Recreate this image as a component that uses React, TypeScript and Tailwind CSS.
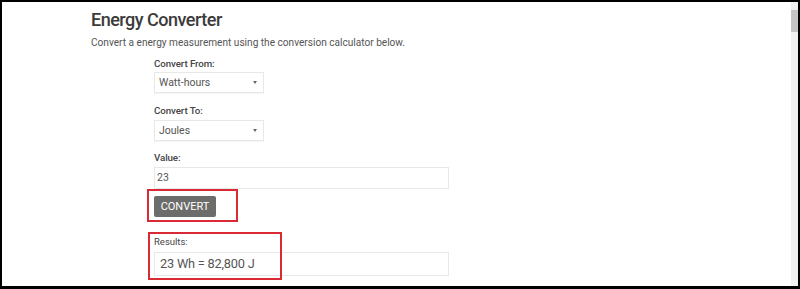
import React from "react";

function Select({ value }: { value: string }) {
  return (
    <div className="flex h-[21px] w-[110px] items-center justify-between border border-[#e8e8e8] pl-[4px] pr-[6px] text-[10.5px] leading-[14px] text-[#555] shadow-[0_1px_1px_rgba(0,0,0,0.04)]">
      <span>{value}</span>
      <span className="h-0 w-0 border-x-[2.5px] border-t-[3px] border-x-transparent border-t-[#666]" />
    </div>
  );
}

export default function App() {
  return (
    <div
      className="flex h-[289px] w-[800px] border-t-2 border-l-2 border-r-2 border-b-[3px] border-black bg-white"
      style={{ fontFamily: 'Roboto, "Open Sans", sans-serif' }}
    >
      <div className="flex-1 pl-[89px]">
        <h1 className="mt-[6px] text-[18px] font-medium leading-[24px] tracking-[-0.5px] text-[#3b3b3b]">
          Energy Converter
        </h1>
        <p className="mt-[4px] text-[10.1px] leading-[14px] text-[#555]">
          Convert a energy measurement using the conversion calculator below.
        </p>
        <div className="ml-[63px] mt-[7px] flex w-[295px] flex-col items-start">
          <label className="text-[9.75px] font-medium leading-[14px] tracking-[-0.1px] text-[#444]">
            Convert From:
          </label>
          <div className="mt-[1px]">
            <Select value="Watt-hours" />
          </div>
          <label className="mt-[11px] text-[9.75px] font-medium leading-[14px] tracking-[-0.1px] text-[#444]">
            Convert To:
          </label>
          <div className="mt-[2px]">
            <Select value="Joules" />
          </div>
          <label className="mt-[10px] text-[9.75px] font-medium leading-[14px] tracking-[-0.1px] text-[#444]">
            Value:
          </label>
          <div className="mt-[2px] flex h-[22px] w-[295px] items-center border border-[#e8e8e8] pl-[2px] text-[10.5px] leading-[14px] text-[#555]">
            23
          </div>
          <div className="relative mt-[7px]">
            <button className="flex h-[21px] w-[62px] items-center justify-center rounded-[2px] bg-[#6c6c6a] text-[11px] leading-[14px] text-white">
              CONVERT
            </button>
            <div className="absolute -left-[7px] -top-[7px] h-[33px] w-[91px] border-2 border-[#d92a35]" />
          </div>
          <div className="relative mt-[18px] w-[295px]">
            <label className="block text-[9.5px] leading-[13px] text-[#444]">
              Results:
            </label>
            <div className="mt-[4px] flex h-[24px] w-[295px] items-center border border-[#e8e8e8] pl-[5px] text-[12.75px] leading-[16px] tracking-[-0.2px] text-[#555]">
              23 Wh = 82,800 J
            </div>
            <div className="absolute -left-[6px] -top-[3px] h-[48px] w-[134px] border-2 border-[#d92a35]" />
          </div>
        </div>
      </div>
      <div className="flex w-[7px] flex-col bg-[#f1f1f1]">
        <div className="mt-[8px] h-[22px] w-full bg-[#c4c4c4]" />
      </div>
    </div>
  );
}
